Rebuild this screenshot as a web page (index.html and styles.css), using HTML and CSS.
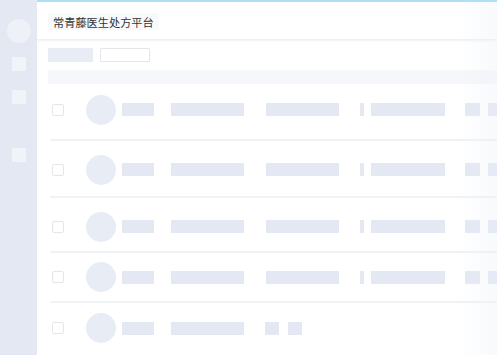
FILE: index.html
```html
<!DOCTYPE html>
<html lang="zh">
<head>
<meta charset="utf-8">
<title>常青藤医生处方平台</title>
<link rel="stylesheet" href="styles.css">
</head>
<body>
<div class="app">
  <aside class="sidebar">
    <div class="side-avatar"></div>
    <div class="side-item side-item--1"></div>
    <div class="side-item side-item--2"></div>
    <div class="side-item side-item--3"></div>
  </aside>
  <main class="main">
    <header class="header">
      <span class="title">常青藤医生处方平台</span>
    </header>
    <div class="content">
      <div class="toolbar">
        <div class="tool-block"></div>
        <div class="tool-box"></div>
      </div>
      <div class="thead"></div>
      <div class="row row--1">
        <span class="check"></span><span class="avatar"></span>
        <span class="sk b1"></span><span class="sk b2"></span><span class="sk b3"></span>
        <span class="sk tiny"></span><span class="sk b4"></span><span class="sk sq1"></span><span class="sk sq2"></span>
      </div>
      <div class="row row--2">
        <span class="check"></span><span class="avatar"></span>
        <span class="sk b1"></span><span class="sk b2"></span><span class="sk b3"></span>
        <span class="sk tiny"></span><span class="sk b4"></span><span class="sk sq1"></span><span class="sk sq2"></span>
      </div>
      <div class="row row--3">
        <span class="check"></span><span class="avatar"></span>
        <span class="sk b1"></span><span class="sk b2"></span><span class="sk b3"></span>
        <span class="sk tiny"></span><span class="sk b4"></span><span class="sk sq1"></span><span class="sk sq2"></span>
      </div>
      <div class="row row--4">
        <span class="check"></span><span class="avatar"></span>
        <span class="sk b1"></span><span class="sk b2"></span><span class="sk b3"></span>
        <span class="sk tiny"></span><span class="sk b4"></span><span class="sk sq1"></span><span class="sk sq2"></span>
      </div>
      <div class="row row--5">
        <span class="check"></span><span class="avatar"></span>
        <span class="sk b1"></span><span class="sk b2"></span>
        <span class="sk sq5a"></span><span class="sk sq5b"></span>
      </div>
    </div>
    <div class="fade"></div>
  </main>
</div>
</body>
</html>
```
FILE: styles.css
```css
* { box-sizing: border-box; }
html, body { margin: 0; padding: 0; }
body {
  font-family: "Noto Sans CJK SC", "Noto Sans", sans-serif;
  background: #ffffff;
  width: 497px;
  height: 355px;
  overflow: hidden;
}
.app {
  display: flex;
  width: 497px;
  height: 355px;
}
.sidebar {
  width: 37px;
  flex: none;
  background: #e3e8f2;
  display: flex;
  flex-direction: column;
  align-items: center;
  padding-top: 19px;
}
.side-avatar {
  width: 24px;
  height: 24px;
  border-radius: 50%;
  background: #eef1f7;
}
.side-item {
  width: 14px;
  height: 14px;
  background: #f0f3f8;
}
.side-item--1 { margin-top: 14px; }
.side-item--2 { margin-top: 19px; }
.side-item--3 { margin-top: 44px; }

.main {
  flex: 1;
  position: relative;
  border-top: 2px solid #ade0f2;
  overflow: hidden;
  min-width: 0;
}
.header {
  height: 38px;
  display: flex;
  align-items: center;
  padding-left: 11px;
  padding-top: 2px;
  border-bottom: 1px solid #eef0f4;
  box-shadow: 0 1px 2px rgba(220, 226, 236, 0.5);
}
.title {
  font-size: 11.2px;
  color: #333333;
  background: #f8f9fb;
  padding: 2px 5px 1px 5px;
  line-height: 14px;
}
.content {
  padding-left: 11px;
}
.toolbar {
  display: flex;
  gap: 7px;
  margin-top: 8px;
  height: 14px;
}
.tool-block {
  width: 45px;
  height: 14px;
  background: #e8ecf4;
}
.tool-box {
  width: 50px;
  height: 14px;
  border: 1px solid #e3e6eb;
  border-radius: 1px;
  background: #fff;
}
.thead {
  margin-top: 8px;
  height: 14px;
  background: #f5f7fa;
}
.row {
  display: flex;
  align-items: center;
  padding-left: 4px;
  border-bottom: 2px solid #eff2f6;
  margin-left: 2px;
}
.row--1 { height: 57px; padding-bottom: 4px; }
.row--2 { height: 57px; padding-top: 2px; }
.row--3 { height: 55px; padding-top: 4px; }
.row--4 { height: 50px; }
.row--5 { height: 50px; border-bottom: none; }

.check {
  width: 12px;
  height: 12px;
  border: 1px solid #e3e6eb;
  border-radius: 2px;
  background: #fff;
  flex: none;
  margin-left: -2px;
}
.avatar {
  width: 30px;
  height: 30px;
  border-radius: 50%;
  background: #e8ecf4;
  flex: none;
  margin-left: 22px;
}
.sk {
  height: 13px;
  background: #e4e8f3;
  flex: none;
}
.b1 { width: 32px; margin-left: 6px; }
.b2 { width: 73px; margin-left: 17px; }
.b3 { width: 73px; margin-left: 22px; }
.tiny { width: 4px; margin-left: 21px; }
.b4 { width: 74px; margin-left: 7px; }
.sq1 { width: 15px; margin-left: 20px; }
.sq2 { width: 15px; margin-left: 8px; }
.sq5a { width: 14px; margin-left: 21px; }
.sq5b { width: 14px; margin-left: 9px; }

.fade {
  position: absolute;
  top: 0;
  right: 0;
  bottom: 0;
  width: 40px;
  background: linear-gradient(to right, rgba(236, 240, 248, 0), rgba(236, 240, 248, 0.35));
  pointer-events: none;
}
```
